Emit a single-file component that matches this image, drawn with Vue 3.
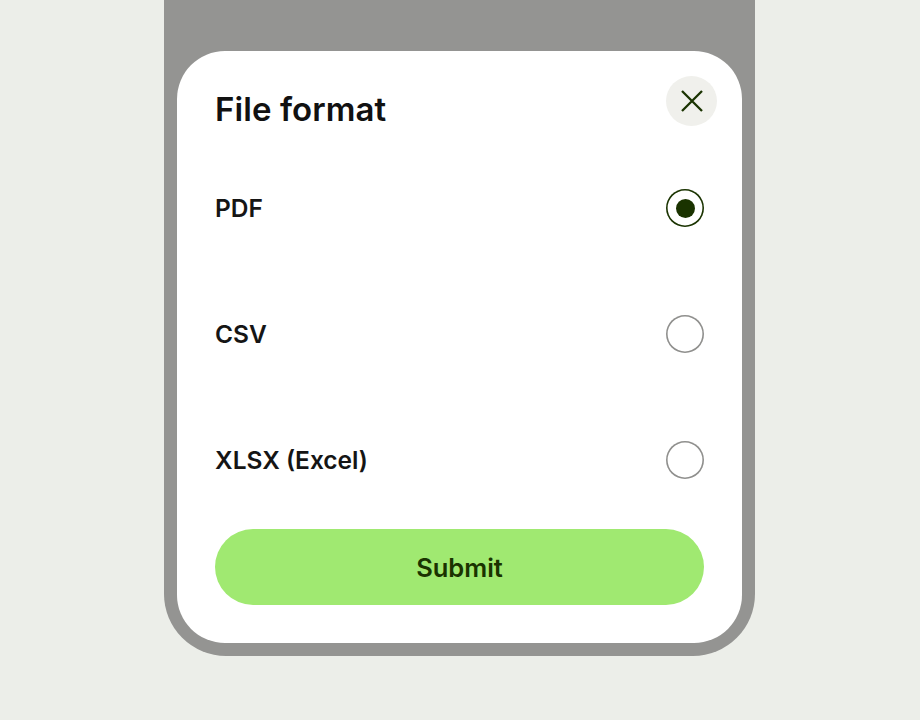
<template>
  <div class="page">
    <div class="phone">
      <section class="sheet">
        <button class="close" aria-label="Close">
          <svg width="22" height="22" viewBox="0 0 22 22" fill="none">
            <path d="M1 1 L21 21 M21 1 L1 21" stroke="#1a3300" stroke-width="2.3" />
          </svg>
        </button>
        <h1 class="title">File format</h1>
        <ul class="options">
          <li v-for="opt in options" :key="opt" class="option" @click="selected = opt">
            <span class="label">{{ opt }}</span>
            <span class="radio" :class="{ checked: selected === opt }"></span>
          </li>
        </ul>
        <button class="submit">Submit</button>
      </section>
    </div>
  </div>
</template>

<script setup>
import { ref } from "vue";

const options = ["PDF", "CSV", "XLSX (Excel)"];
const selected = ref("PDF");
</script>

<style>
body {
  background: #eceee9;
}
</style>

<style scoped>
.page {
  height: 720px;
  padding-right: 1px;
  box-sizing: border-box;
  display: flex;
  justify-content: center;
  font-family: Inter, "Liberation Sans", sans-serif;
  background: #eceee9;
}
.phone {
  width: 591px;
  height: 656px;
  box-sizing: border-box;
  padding: 51px 13px 13px;
  background: #949492;
  border-radius: 0 0 62px 62px;
}
.sheet {
  position: relative;
  height: 592px;
  box-sizing: border-box;
  padding: 38px;
  background: #fff;
  border-radius: 48px;
}
.close {
  position: absolute;
  top: 25px;
  right: 25px;
  width: 51px;
  height: 50px;
  padding: 0;
  border: none;
  border-radius: 50%;
  background: #f0f0ec;
  display: flex;
  align-items: center;
  justify-content: center;
}
.title {
  margin: 0;
  height: 40px;
  line-height: 40px;
  font-size: 33px;
  font-weight: 600;
  letter-spacing: 0.08px;
  color: #111;
}
.options {
  list-style: none;
  margin: 16px 0 6px;
  padding: 0;
}
.option {
  height: 126px;
  display: flex;
  align-items: center;
  justify-content: space-between;
}
.label {
  font-size: 24.5px;
  font-weight: 600;
  color: #151515;
}
.radio {
  width: 38px;
  height: 38px;
  box-sizing: border-box;
  box-shadow: inset 0 0 0 1.6px #8f8f8d;
  border-radius: 50%;
  display: flex;
  align-items: center;
  justify-content: center;
}
.radio.checked {
  box-shadow: inset 0 0 0 1.6px #1a3300;
}
.radio.checked::after {
  content: "";
  width: 19px;
  height: 19px;
  border-radius: 50%;
  background: #1a3300;
}
.submit {
  display: block;
  width: 100%;
  height: 76px;
  border: none;
  border-radius: 38px;
  background: #a0e971;
  color: #1a3300;
  font-family: inherit;
  font-size: 25.5px;
  font-weight: 600;
}
</style>
